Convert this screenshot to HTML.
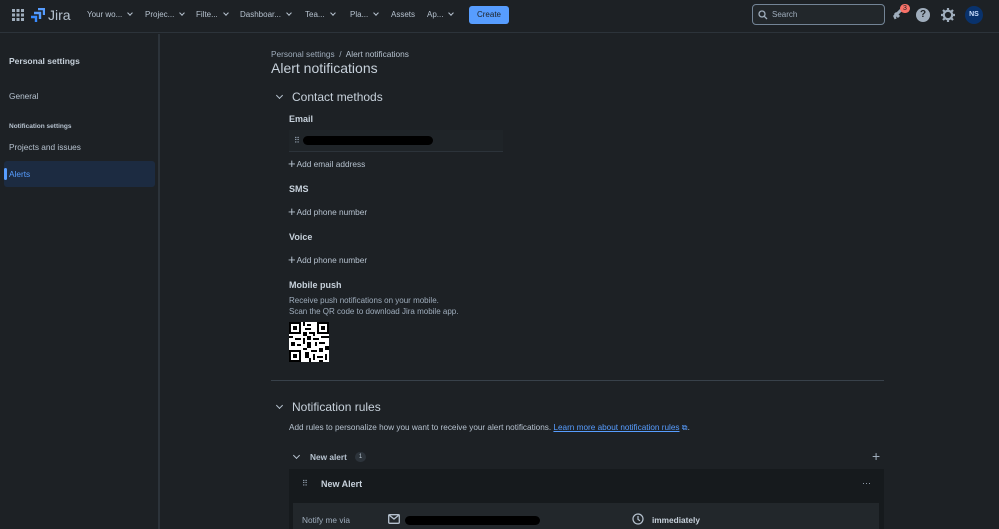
<!DOCTYPE html>
<html><head><meta charset="utf-8"><style>
*{margin:0;padding:0;box-sizing:border-box}
body{width:999px;height:529px;background:#1d2125;font-family:"Liberation Sans",sans-serif;color:#b6c2cf;position:relative;overflow:hidden;font-size:8px}
.a{position:absolute;white-space:nowrap}
.top{position:absolute;left:0;top:0;width:999px;height:33px;background:#1d2125;border-bottom:1px solid #2c333a}
.nav{font-size:8px;color:#b6c2cf}
.chev{display:inline-block;width:4px;height:4px;border-right:1.3px solid #b6c2cf;border-bottom:1.3px solid #b6c2cf;transform:rotate(45deg);margin-left:6px;position:relative;top:-2px}
.ch{position:absolute;width:5px;height:5px;border-right:1.4px solid #b6c2cf;border-bottom:1.4px solid #b6c2cf;transform:rotate(45deg)}
.side{position:absolute;left:0;top:34px;width:160px;height:495px;border-right:2px solid #2c333a}
.h{color:#c7d1db;font-weight:bold;font-size:9px}
.add{font-size:8.3px;color:#b6c2cf}
.add b{font-weight:normal;font-size:13px;position:relative;top:1px;margin-right:1px}
.sec{font-size:12px;color:#c7d1db}
</style></head><body>
<div class="top">
<svg class="a" style="left:12px;top:9px" width="12" height="12"><g fill="#9fadbc"><rect x="0" y="0" width="3" height="3"/><rect x="4.5" y="0" width="3" height="3"/><rect x="9" y="0" width="3" height="3"/><rect x="0" y="4.5" width="3" height="3"/><rect x="4.5" y="4.5" width="3" height="3"/><rect x="9" y="4.5" width="3" height="3"/><rect x="0" y="9" width="3" height="3"/><rect x="4.5" y="9" width="3" height="3"/><rect x="9" y="9" width="3" height="3"/></g></svg>
<svg class="a" style="left:31px;top:8px" width="14" height="14" viewBox="0 0 14 14"><path d="M7 1h6v6" stroke="#579dff" stroke-width="2.4" fill="none"/><path d="M3 5h6v6" stroke="#579dff" stroke-width="2.4" fill="none"/><path d="M0 9h5v5" stroke="#388bff" stroke-width="2.4" fill="none"/></svg>
<div class="a" style="left:48px;top:7px;font-size:14px;color:#b6c2cf">Jira</div>
<div class="a nav" style="left:87px;top:10px">Your wo...<span class="chev"></span></div>
<div class="a nav" style="left:145px;top:10px">Projec...<span class="chev"></span></div>
<div class="a nav" style="left:196px;top:10px">Filte...<span class="chev"></span></div>
<div class="a nav" style="left:240px;top:10px">Dashboar...<span class="chev"></span></div>
<div class="a nav" style="left:305px;top:10px">Tea...<span class="chev"></span></div>
<div class="a nav" style="left:350px;top:10px">Pla...<span class="chev"></span></div>
<div class="a nav" style="left:391px;top:10px">Assets</div>
<div class="a nav" style="left:427px;top:10px">Ap...<span class="chev"></span></div>
<div class="a" style="left:469px;top:6px;width:40px;height:18px;background:#579dff;border-radius:3px;color:#1d2125;font-size:8px;text-align:center;line-height:18px">Create</div>
<div class="a" style="left:752px;top:4px;width:133px;height:21px;border:1px solid #738496;border-radius:4px;background:#22272b"></div>
<svg class="a" style="left:758px;top:10px" width="10" height="10"><circle cx="4" cy="4" r="3" stroke="#9fadbc" stroke-width="1.3" fill="none"/><path d="M6.3 6.3L9 9" stroke="#9fadbc" stroke-width="1.3"/></svg>
<div class="a nav" style="left:772px;top:10px;color:#9fadbc">Search</div>
<svg class="a" style="left:892px;top:8px" width="12" height="12"><path d="M2 9L9 2M3 5l4 4M2 10l2-1" stroke="#9fadbc" stroke-width="3"/></svg>
<div class="a" style="left:900px;top:4px;width:10px;height:9px;border-radius:5px;background:#f87168;color:#1d2125;font-size:7px;text-align:center;line-height:9px">3</div>
<div class="a" style="left:916px;top:8px;width:14px;height:14px;border-radius:7px;background:#9fadbc;color:#1d2125;font-size:10px;font-weight:bold;text-align:center;line-height:14px">?</div>
<svg class="a" style="left:941px;top:8px" width="14" height="14" viewBox="0 0 14 14"><circle cx="7" cy="7" r="4.2" stroke="#9fadbc" stroke-width="2.2" fill="none"/><g stroke="#9fadbc" stroke-width="2.2"><path d="M7 0v3M7 11v3M0 7h3M11 7h3M2 2l2 2M10 10l2 2M2 12l2-2M10 4l2-2"/></g></svg>
<div class="a" style="left:965px;top:6px;width:18px;height:18px;border-radius:9px;background:#09326c;color:#cce0ff;font-size:7px;font-weight:bold;text-align:center;line-height:18px">NS</div>
</div>
<div class="side">
<div class="a h" style="left:9px;top:22px;font-size:8.5px">Personal settings</div>
<div class="a" style="left:9px;top:57px;font-size:8.3px">General</div>
<div class="a" style="left:9px;top:89px;font-size:6.5px;font-weight:bold">Notification settings</div>
<div class="a" style="left:9px;top:108px;font-size:8.3px">Projects and issues</div>
<div class="a" style="left:4px;top:127px;width:151px;height:26px;background:#1c2b41;border-radius:3px"></div>
<div class="a" style="left:4px;top:134px;width:3px;height:12px;background:#579dff;border-radius:2px"></div>
<div class="a" style="left:9px;top:135px;font-size:8.3px;color:#579dff">Alerts</div>
</div>
<div class="a" style="left:271px;top:49px;font-size:8.3px;color:#9fadbc">Personal settings &nbsp;/&nbsp; <span style="color:#b6c2cf">Alert notifications</span></div>
<div class="a" style="left:271px;top:60px;font-size:14px;color:#c7d1db">Alert notifications</div>
<span class="ch" style="left:277px;top:93px"></span>
<div class="a sec" style="left:292px;top:90px">Contact methods</div>
<div class="a h" style="left:289px;top:114px">Email</div>
<div class="a" style="left:289px;top:130px;width:214px;height:22px;background:#1f2428;border-bottom:1px solid #2c333a"></div>
<div class="a" style="left:294px;top:136px;color:#9fadbc;font-size:8px">⠿</div>
<div class="a" style="left:303px;top:136px;width:130px;height:9px;background:#000;border-radius:5px"></div>
<div class="a add" style="left:288px;top:155px"><b>+</b>Add email address</div>
<div class="a h" style="left:289px;top:184px">SMS</div>
<div class="a add" style="left:288px;top:203px"><b>+</b>Add phone number</div>
<div class="a h" style="left:289px;top:232px">Voice</div>
<div class="a add" style="left:288px;top:251px"><b>+</b>Add phone number</div>
<div class="a h" style="left:289px;top:280px">Mobile push</div>
<div class="a" style="left:289px;top:296px;font-size:8px;color:#9fadbc">Receive push notifications on your mobile.</div>
<div class="a" style="left:289px;top:307px;font-size:8px;color:#9fadbc">Scan the QR code to download Jira mobile app.</div>
<svg class="a" style="left:289px;top:322px" width="40" height="40" viewBox="0 0 20 20"><rect width="20" height="20" fill="#fff"/><g fill="#000"><path d="M0 0h6v6H0zM14 0h6v6h-6zM0 14h6v6H0z"/></g><g fill="#fff"><path d="M1 1h4v4H1zM15 1h4v4h-4zM1 15h4v4H1z"/></g><g fill="#000"><path d="M2 2h2v2H2zM16 2h2v2h-2zM2 16h2v2H2z"/><path d="M7 0h1v2H7zM9 1h2v1H9zM8 3h3v1H8zM7 5h2v2H7zM10 5h3v1h-3zM0 7h2v1H0zM3 8h3v1H3zM7 8h1v3H7zM9 7h2v2H9zM12 8h3v1h-3zM16 7h4v1h-4zM1 10h2v2H1zM4 11h2v1H4zM9 10h2v3H9zM13 10h1v2h-1zM15 10h3v1h-3zM18 12h2v2h-2zM7 13h2v1H7zM11 14h3v1h-3zM15 13h2v2h-2zM8 15h2v3H8zM12 16h1v3h-1zM14 17h3v1h-3zM18 16h1v3h-1zM10 18h1v2h-1zM15 19h2v1h-2zM12 6h1v1h-1z"/></g></svg>
<div class="a" style="left:271px;top:380px;width:613px;height:1px;background:#38414a"></div>
<span class="ch" style="left:277px;top:403px"></span>
<div class="a sec" style="left:292px;top:400px">Notification rules</div>
<div class="a" style="left:289px;top:423px;font-size:8.2px">Add rules to personalize how you want to receive your alert notifications. <span style="color:#579dff;text-decoration:underline">Learn more about notification rules</span> <span style="color:#579dff">⧉</span>.</div>
<span class="ch" style="left:294px;top:453px"></span>
<div class="a" style="left:310px;top:452px;font-size:8.3px;font-weight:bold;color:#b6c2cf">New alert</div>
<div class="a" style="left:355px;top:452px;width:11px;height:10px;border-radius:5px;background:#2c333a;font-size:6px;text-align:center;line-height:10px">1</div>
<div class="a" style="left:872px;top:448px;font-size:14px;color:#9fadbc">+</div>
<div class="a" style="left:289px;top:469px;width:595px;height:60px;background:#161a1d"></div>
<div class="a" style="left:302px;top:479px;font-size:8px;color:#9fadbc">⠿</div>
<div class="a" style="left:321px;top:479px;font-size:9px;font-weight:bold;color:#c7d1db">New Alert</div>
<div class="a" style="left:862px;top:478px;font-size:9px;color:#9fadbc">···</div>
<div class="a" style="left:293px;top:503px;width:586px;height:26px;background:#22272b"></div>
<div class="a" style="left:302px;top:515px;font-size:8.3px;color:#9fadbc">Notify me via</div>
<svg class="a" style="left:388px;top:514px" width="12" height="10"><rect x=".7" y=".7" width="10.6" height="8.6" rx="1" stroke="#b6c2cf" stroke-width="1.3" fill="none"/><path d="M1 1l5 4 5-4" stroke="#b6c2cf" stroke-width="1.3" fill="none"/></svg>
<div class="a" style="left:405px;top:516px;width:135px;height:9px;background:#000;border-radius:5px"></div>
<svg class="a" style="left:632px;top:513px" width="12" height="12"><circle cx="6" cy="6" r="5" stroke="#b6c2cf" stroke-width="1.2" fill="none"/><path d="M6 3v3.3l2 1.5" stroke="#b6c2cf" stroke-width="1.2" fill="none"/></svg>
<div class="a" style="left:652px;top:515px;font-size:8.3px;font-weight:bold;color:#c7d1db">immediately</div>
</body></html>
